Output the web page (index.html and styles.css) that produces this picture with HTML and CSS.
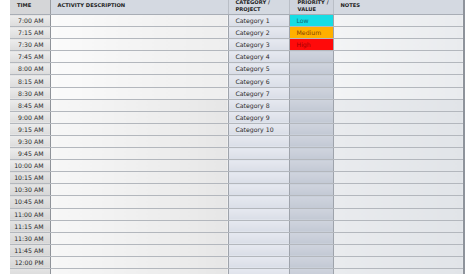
FILE: index.html
```html
<!DOCTYPE html>
<html>
<head>
<meta charset="utf-8">
<link rel="stylesheet" href="styles.css">
</head>
<body>
<div class="sheet">
<table class="schedule">
  <colgroup>
    <col class="c-time"><col class="c-act"><col class="c-cat"><col class="c-pri"><col class="c-notes">
  </colgroup>
  <thead>
    <tr>
      <th class="h-time">TIME</th>
      <th class="h-act">ACTIVITY DESCRIPTION</th>
      <th class="h-cat">CATEGORY /<br>PROJECT</th>
      <th class="h-pri">PRIORITY /<br>VALUE</th>
      <th class="h-notes">NOTES</th>
    </tr>
  </thead>
  <tbody>
    <tr><td class="time">7:00 AM</td><td class="act"></td><td class="cat">Category 1</td><td class="pri low">Low</td><td class="notes"></td></tr>
    <tr><td class="time">7:15 AM</td><td class="act"></td><td class="cat">Category 2</td><td class="pri med">Medium</td><td class="notes"></td></tr>
    <tr><td class="time">7:30 AM</td><td class="act"></td><td class="cat">Category 3</td><td class="pri high">High</td><td class="notes"></td></tr>
    <tr><td class="time">7:45 AM</td><td class="act"></td><td class="cat">Category 4</td><td class="pri"></td><td class="notes"></td></tr>
    <tr><td class="time">8:00 AM</td><td class="act"></td><td class="cat">Category 5</td><td class="pri"></td><td class="notes"></td></tr>
    <tr><td class="time">8:15 AM</td><td class="act"></td><td class="cat">Category 6</td><td class="pri"></td><td class="notes"></td></tr>
    <tr><td class="time">8:30 AM</td><td class="act"></td><td class="cat">Category 7</td><td class="pri"></td><td class="notes"></td></tr>
    <tr><td class="time">8:45 AM</td><td class="act"></td><td class="cat">Category 8</td><td class="pri"></td><td class="notes"></td></tr>
    <tr><td class="time">9:00 AM</td><td class="act"></td><td class="cat">Category 9</td><td class="pri"></td><td class="notes"></td></tr>
    <tr><td class="time">9:15 AM</td><td class="act"></td><td class="cat">Category 10</td><td class="pri"></td><td class="notes"></td></tr>
    <tr><td class="time">9:30 AM</td><td class="act"></td><td class="cat"></td><td class="pri"></td><td class="notes"></td></tr>
    <tr><td class="time">9:45 AM</td><td class="act"></td><td class="cat"></td><td class="pri"></td><td class="notes"></td></tr>
    <tr><td class="time">10:00 AM</td><td class="act"></td><td class="cat"></td><td class="pri"></td><td class="notes"></td></tr>
    <tr><td class="time">10:15 AM</td><td class="act"></td><td class="cat"></td><td class="pri"></td><td class="notes"></td></tr>
    <tr><td class="time">10:30 AM</td><td class="act"></td><td class="cat"></td><td class="pri"></td><td class="notes"></td></tr>
    <tr><td class="time">10:45 AM</td><td class="act"></td><td class="cat"></td><td class="pri"></td><td class="notes"></td></tr>
    <tr><td class="time">11:00 AM</td><td class="act"></td><td class="cat"></td><td class="pri"></td><td class="notes"></td></tr>
    <tr><td class="time">11:15 AM</td><td class="act"></td><td class="cat"></td><td class="pri"></td><td class="notes"></td></tr>
    <tr><td class="time">11:30 AM</td><td class="act"></td><td class="cat"></td><td class="pri"></td><td class="notes"></td></tr>
    <tr><td class="time">11:45 AM</td><td class="act"></td><td class="cat"></td><td class="pri"></td><td class="notes"></td></tr>
    <tr><td class="time">12:00 PM</td><td class="act"></td><td class="cat"></td><td class="pri"></td><td class="notes"></td></tr>
    <tr><td class="time"></td><td class="act"></td><td class="cat"></td><td class="pri"></td><td class="notes"></td></tr>
  </tbody>
</table>
</div>
</body>
</html>
```
FILE: styles.css
```css
html, body {
  margin: 0;
  padding: 0;
  background: #ffffff;
  overflow: hidden;
}
body {
  width: 474px;
  height: 274px;
  font-family: "DejaVu Sans", "Liberation Sans", sans-serif;
  color: #222;
}
.sheet {
  padding-left: 10px;
  margin-top: -3px;
}
.schedule {
  border-collapse: collapse;
  table-layout: fixed;
  width: 454px;
  border-right: 2px solid #8e939b;
}
.c-time { width: 40px; }
.c-act { width: 178px; }
.c-cat { width: 61px; }
.c-pri { width: 44px; }
.c-notes { width: 131px; }

th {
  height: 17px;
  padding: 0 0 0 7px;
  font-size: 5.2px;
  font-weight: bold;
  text-align: left;
  vertical-align: middle;
  line-height: 7px;
  color: #1e1e1e;
  background: #d4d9e1;
  border-left: 1px solid #b9bec6;
  border-bottom: 1px solid #a8adb5;
}
th.h-time {
  background: #d5d6d8;
  border-left: none;
  border-right: 1px solid #9a9da3;
}
th.h-pri { background: #cfd4dd; padding-left: 8px; }

td {
  height: 11.1px;
  padding: 0;
  font-size: 6.2px;
  line-height: 11px;
  color: #2a2a2a;
  white-space: nowrap;
  border-bottom: 1px solid #b3b7bd;
  border-left: 1px solid #a7abb2;
}
td.time {
  text-align: right;
  padding-right: 6px;
  background: linear-gradient(#ececec, #dcdcdc);
  border-left: none;
  border-right: 1px solid #8f9399;
}
td.act {
  background: linear-gradient(90deg, #fbfbfb, #f2f2f2 60%, #eeeeee);
}
td.cat {
  padding-left: 7px;
  background: linear-gradient(#e6e9f0, #dadee7);
  border-left: 1px solid #9ea3ab;
}
td.pri {
  padding-left: 7px;
  background: linear-gradient(#cfd4de, #c3c9d4);
  border-left: 1px solid #9ea3ab;
}
td.notes {
  background: linear-gradient(90deg, #f3f4f5, #e9ebee);
  border-left: 1px solid #9ea3ab;
}
td.low { background: #16dde4; color: #0b6d7a; }
td.med { background: #ffb000; color: #8a4300; }
td.high { background: #ff0a0a; color: #a10000; }

tbody tr:nth-child(n+8) td.act {
  background: linear-gradient(90deg, #f7f7f7, #ececec 70%, #e6e6e6);
}
tbody tr:nth-child(n+8) td.notes {
  background: linear-gradient(90deg, #e9ebee, #e1e4e8);
}
tbody tr:nth-child(n+14) td.time {
  background: linear-gradient(#e4e4e4, #d6d6d6);
}
```
